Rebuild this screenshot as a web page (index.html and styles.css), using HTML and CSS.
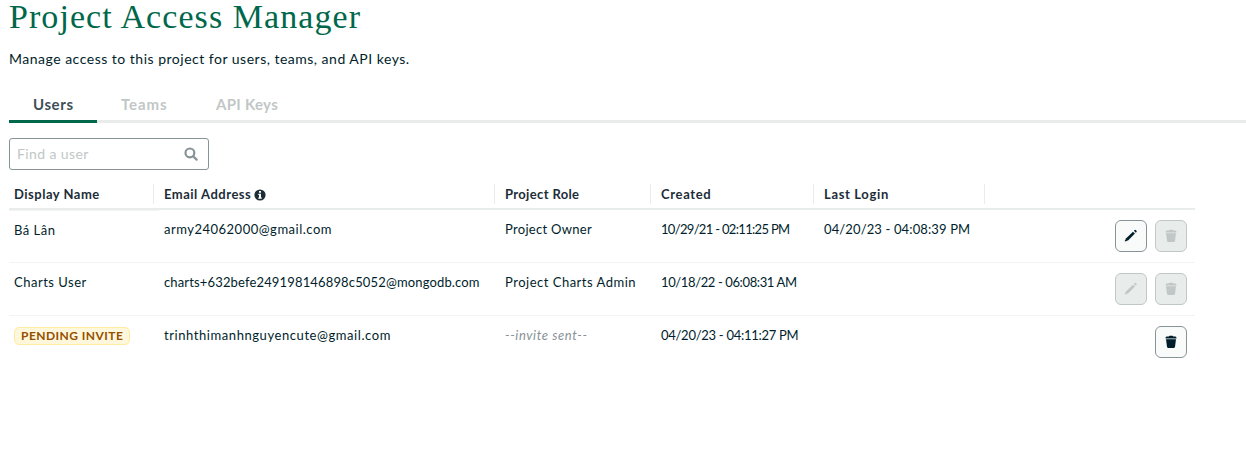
FILE: index.html
```html
<!DOCTYPE html>
<html lang="en">
<head>
<meta charset="utf-8">
<title>Project Access Manager</title>
<link rel="stylesheet" href="styles.css">
</head>
<body>
<svg class="sprite" aria-hidden="true">
  <symbol id="pencil" viewBox="0 0 16 16">
    <path d="M10 3.7 11.9 5.6 5.3 12.3 2.2 13.6 1.7 13.1 3.2 10.3Z"/>
    <path d="M10.9 2.8 11.7 2.1Q12.3 1.6 12.9 2.2L13.5 2.8Q14 3.4 13.5 4L12.8 4.7Z"/>
  </symbol>
  <symbol id="trash" viewBox="0 0 16 16">
    <path d="M5.8 2.4Q6 1.8 6.7 1.8H9.4Q10.1 1.8 10.3 2.4H12Q13.4 2.4 13.4 3.5V4.1H2.6V3.5Q2.6 2.4 4 2.4Z"/>
    <path opacity=".55" d="M2.6 4.1H13.4V5.3H2.6Z"/>
    <path d="M3 5.3H13L12 12.8Q11.8 14 10.6 14H5.4Q4.2 14 4 12.8Z"/>
  </symbol>
</svg>
<main class="page">
  <h1 class="title">Project Access Manager</h1>
  <p class="intro">Manage access to this project for users, teams, and API keys.</p>
  <nav class="tabs">
    <a class="tab tab-active">Users</a>
    <a class="tab tab-teams">Teams</a>
    <a class="tab tab-keys">API Keys</a>
  </nav>
  <div class="search">
    <span class="search-text">Find a user</span>
    <svg class="search-icon" viewBox="0 0 14 14"><circle cx="5.9" cy="5.9" r="4.4"/><path d="M9.2 9.2 12.6 12.6"/></svg>
  </div>
  <section class="table">
    <div class="row head">
      <div class="cell">Display Name</div>
      <div class="cell">Email Address
        <svg class="info" viewBox="0 0 12 12"><circle cx="6" cy="6" r="5.6"/><path d="M5 2H7V3.7H5ZM4.3 4.8H7V8.5H7.8V9.7H4.3V8.5H5V6H4.3Z"/></svg>
      </div>
      <div class="cell head-role">Project Role</div>
      <div class="cell head-date">Created</div>
      <div class="cell head-date">Last Login</div>
      <div class="cell"></div>
    </div>
    <div class="row">
      <div class="cell name-low">Bá Lân</div>
      <div class="cell">army24062000@gmail.com</div>
      <div class="cell role-owner">Project Owner</div>
      <div class="cell date-tightest">10/29/21 - 02:11:25 PM</div>
      <div class="cell date-wide">04/20/23 - 04:08:39 PM</div>
      <div class="cell actions">
        <button class="btn"><svg><use href="#pencil"/></svg></button>
        <button class="btn" disabled><svg><use href="#trash"/></svg></button>
      </div>
    </div>
    <div class="row">
      <div class="cell">Charts User</div>
      <div class="cell mail-long">charts+632befe249198146898c5052@mongodb.com</div>
      <div class="cell">Project Charts Admin</div>
      <div class="cell date-tighter">10/18/22 - 06:08:31 AM</div>
      <div class="cell"></div>
      <div class="cell actions">
        <button class="btn" disabled><svg><use href="#pencil"/></svg></button>
        <button class="btn" disabled><svg><use href="#trash"/></svg></button>
      </div>
    </div>
    <div class="row last">
      <div class="cell"><span class="badge">PENDING INVITE</span></div>
      <div class="cell mail-invite">trinhthimanhnguyencute@gmail.com</div>
      <div class="cell sent">--invite sent--</div>
      <div class="cell date-tight">04/20/23 - 04:11:27 PM</div>
      <div class="cell"></div>
      <div class="cell actions">
        <button class="btn"><svg><use href="#trash"/></svg></button>
      </div>
    </div>
  </section>
</main>
</body>
</html>
```
FILE: styles.css
```css
* { box-sizing: border-box; }
body {
  margin: 0;
  background: #fff;
  color: #001e2b;
  font-family: Lato, "Open Sans", sans-serif;
  font-size: 13px;
  overflow: hidden;
}
.sprite { display: none; }
.page { padding-left: 9px; }
.title {
  margin: 0;
  height: 36px;
  line-height: 34px;
  font-family: "Liberation Serif", serif;
  font-size: 34px;
  font-weight: 400;
  color: #00684a;
  white-space: nowrap;
  letter-spacing: 1.07px;
}
.intro {
  margin: 13px 0 0;
  font-size: 14px;
  line-height: 20px;
  letter-spacing: .5px;
}
.tabs {
  display: flex;
  height: 37px;
  margin-top: 17px;
  box-shadow: inset 0 -3px #e8edeb;
}
.tab {
  padding: 8px 24px 0;
  height: 37px;
  line-height: 20px;
  font-size: 15px;
  font-weight: 700;
  letter-spacing: .6px;
  color: #c1c7c6;
  white-space: nowrap;
}
.tab-active { width: 88px; color: #3d4f58; box-shadow: inset 0 -3px #00684a; }
.tab-teams { width: 95px; letter-spacing: .9px; }
.tab-keys { letter-spacing: .3px; }
.search {
  display: flex;
  justify-content: space-between;
  align-items: center;
  width: 200px;
  height: 32px;
  margin-top: 15px;
  padding: 0 10px 0 7px;
  border: 1px solid #889397;
  border-radius: 3px;
  font-size: 14px;
  color: #c1c7c6;
  letter-spacing: .4px;
}
.search-text { padding-bottom: 2px; }
.search-icon { width: 14px; height: 14px; fill: none; stroke: #889397; stroke-width: 2.2; stroke-linecap: round; }
.table { width: 1186px; margin-top: 14px; }
.row {
  display: grid;
  grid-template-columns: 145px 341px 156px 163px 171px 210px;
  height: 53px;
  border-bottom: 1px solid #f2f4f4;
}
.cell { padding: 9px 0 0 5px; line-height: 20px; white-space: nowrap; letter-spacing: .5px; }
.cell + .cell { padding-left: 10px; }
.head { height: 26px; border-bottom: 2px solid #e8edeb; font-weight: 700; color: #1c2d38; }
.head .cell { padding-top: 0; height: 20px; border-right: 1px solid #e8edeb; }
.head .cell:last-child { border-right: 0; }
.cell.head-role { letter-spacing: .35px; }
.cell.head-date { letter-spacing: .65px; }
.info { width: 12px; height: 12px; margin-left: -1px; vertical-align: -1.5px; fill: #1c2d38; }
.info path { fill: #fff; }
.name-low { padding-top: 10px; width: 150px; box-shadow: inset 0 1px #f2f4f4; }
.cell.role-owner { letter-spacing: .3px; }
.cell.mail-long { letter-spacing: .15px; }
.cell.mail-invite { letter-spacing: .57px; }
.cell.date-wide { letter-spacing: .13px; }
.cell.date-tight { letter-spacing: -.28px; }
.cell.date-tighter { letter-spacing: -.38px; }
.cell.date-tightest { letter-spacing: -.68px; }
.last { border-bottom: 0; }
.row .actions { display: flex; justify-content: flex-end; gap: 8px; padding: 10px 8px 0 0; }
.btn {
  display: grid;
  place-items: center;
  width: 32px;
  height: 32px;
  padding: 0;
  border: 1px solid #889397;
  border-radius: 6px;
  background: #f9fbfa;
  color: #001e2b;
}
.btn svg { width: 16px; height: 16px; fill: currentColor; }
.btn:disabled { border-color: #c1c7c6; background: #e8edeb; color: #c1c7c6; }
.badge {
  display: inline-block;
  width: 116px;
  height: 18px;
  margin-top: 1px;
  padding: 0 6px;
  border: 1px solid #ffec9e;
  border-radius: 5px;
  background: #fef7db;
  color: #944f01;
  font-size: 12px;
  font-weight: 700;
  line-height: 15px;
  letter-spacing: .45px;
}
.cell.sent { color: #889397; font-style: italic; letter-spacing: .6px; }
```
